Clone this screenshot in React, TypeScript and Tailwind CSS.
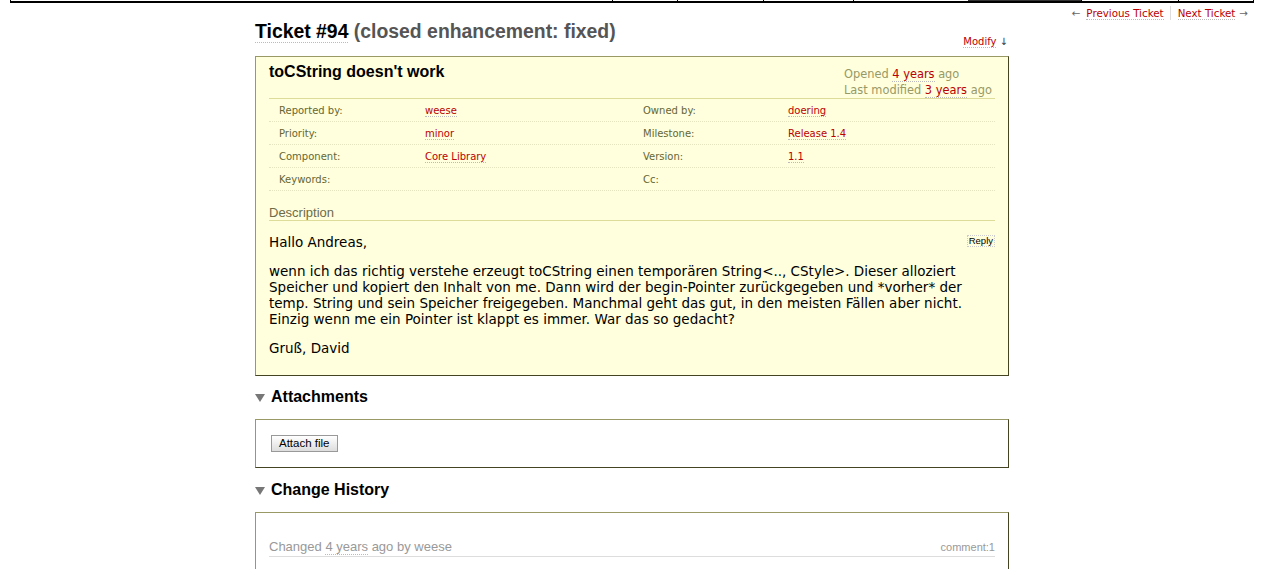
import React from 'react';

const Link: React.FC<{ children: React.ReactNode }> = ({ children }) => (
    <a className="text-[#bb0000] border-b border-dotted border-[#bbbbbb] no-underline">{children}</a>
);

const Tri = () => (
    <svg width="10" height="9" viewBox="0 0 10 9" className="mr-[6px]">
        <path d="M0 1 L10 1 L5 9 Z" fill="#777777" />
    </svg>
);

const props: [string, string, string, string][] = [
    ['Reported by:', 'weese', 'Owned by:', 'doering'],
    ['Priority:', 'minor', 'Milestone:', 'Release 1.4'],
    ['Component:', 'Core Library', 'Version:', '1.1'],
    ['Keywords:', '', 'Cc:', ''],
];

export default function App() {
    return (
        <div className="h-screen overflow-hidden bg-white text-black font-['DejaVu_Sans',Verdana,sans-serif]">
            {/* main nav strip, scrolled off the top */}
            <div className="mx-[10px] flex h-[3px] border-x border-b-2 border-black">
                <div className="w-[602px] border-r border-black" />
                <div className="w-[65px] border-r border-black" />
                <div className="w-[86px] border-r border-black" />
                <div className="w-[90px] border-r border-black" />
                <div className="w-[114px]" />
                <div className="w-[113px] bg-[#333333]" />
                <div className="w-[97px] border-l border-black" />
                <div className="flex-1 border-l border-black" />
            </div>

            {/* context nav */}
            <div className="flex justify-end pr-[16px] pt-[3px] text-[10.3px] leading-[14px]">
                <span className="pr-[6px]">
                    <span className="mr-[6px] text-[#666]">←</span>
                    <Link>Previous Ticket</Link>
                </span>
                <span className="border-l border-[#dddddd] pl-[7px]">
                    <Link>Next Ticket</Link>
                    <span className="ml-[4px] text-[#666]">→</span>
                </span>
            </div>

            <div className="ml-[255px] w-[754px]">
                <div className="flex items-end justify-between">
                    <h1 className="font-['Liberation_Sans',Arial,sans-serif] text-[19.4px] font-bold leading-[22px]">
                        <span className="border-b border-dotted border-[#bbbbbb]">Ticket #94</span>{' '}
                        <span className="text-[#555555]">(closed enhancement: fixed)</span>
                    </h1>
                    <div className="mr-[1px] mb-[-7px] text-[10px]">
                        <Link>Modify</Link> <span className="text-[#333]">↓</span>
                    </div>
                </div>

                {/* ticket box */}
                <div className="mt-[14px] border border-t-[#999966] border-l-[#999966] border-r-[#444422] border-b-[#444422] bg-[#ffffdd] px-[13px] pt-[6px] pb-[19px]">
                    <div className="flex justify-between border-b border-[#dddd99]">
                        <h2 className="mt-[-1px] font-['Liberation_Sans',Arial,sans-serif] text-[16px] font-bold leading-[20px]">
                            toCString doesn't work
                        </h2>
                        <div className="w-[148px] mr-[3px] text-left text-[11.4px] leading-[16px] text-[#999966] whitespace-nowrap">
                            <div className="mt-[3px]">
                                Opened <Link>4 years</Link> ago
                            </div>
                            <div>
                                Last modified <Link>3 years</Link> ago
                            </div>
                        </div>
                    </div>

                    <div className="text-[10px] leading-[13px]">
                        {props.map((r) => (
                            <div key={r[0]} className="grid h-[23px] grid-cols-[146px_218px_145px_1fr] items-center border-b border-dotted border-[#e4e4c0]">
                                <div className="pl-[10px] text-[#666633]">{r[0]}</div>
                                <div className="pl-[10px]">{r[1] && <Link>{r[1]}</Link>}</div>
                                <div className="pl-[10px] text-[#666633]">{r[2]}</div>
                                <div className="pl-[10px]">{r[3] && <Link>{r[3]}</Link>}</div>
                            </div>
                        ))}
                    </div>

                    <h3 className="mt-[15px] border-b border-[#dddd99] font-['Liberation_Sans',Arial,sans-serif] text-[13px] leading-[14px] text-[#6e6b49]">
                        Description
                    </h3>

                    <div className="mt-[13px] text-[13.5px] leading-[16px]">
                        <div className="flex items-center justify-between">
                            <p>Hallo Andreas,</p>
                            <span className="mt-[-3px] border border-dotted border-[#cccccc] px-[1px] font-['Liberation_Sans',Arial,sans-serif] text-[9.5px] leading-[10px]">
                                Reply
                            </span>
                        </div>
                        <p className="mt-[13px]">
                            wenn ich das richtig verstehe erzeugt toCString einen temporären String&lt;.., CStyle&gt;. Dieser alloziert
                            <br />
                            Speicher und kopiert den Inhalt von me. Dann wird der begin-Pointer zurückgegeben und *vorher* der
                            <br />
                            temp. String und sein Speicher freigegeben. Manchmal geht das gut, in den meisten Fällen aber nicht.
                            <br />
                            Einzig wenn me ein Pointer ist klappt es immer. War das so gedacht?
                        </p>
                        <p className="mt-[13px]">Gruß, David</p>
                    </div>
                </div>

                {/* attachments */}
                <h2 className="mt-[12px] flex items-center font-['Liberation_Sans',Arial,sans-serif] text-[16px] font-bold leading-[18px]">
                    <Tri />
                    Attachments
                </h2>
                <div className="mt-[13px] flex h-[49px] items-start border border-t-[#999966] border-l-[#999966] border-r-[#444422] border-b-[#444422] px-[15px] pt-[15px]">
                    <button className="h-[17px] border border-[#999999] bg-gradient-to-b from-white to-[#dddddd] px-[7px] font-['Liberation_Sans',Arial,sans-serif] text-[11.5px] leading-[15px]">
                        Attach file
                    </button>
                </div>

                {/* change history */}
                <h2 className="mt-[13px] flex items-center font-['Liberation_Sans',Arial,sans-serif] text-[16px] font-bold leading-[18px]">
                    <Tri />
                    Change History
                </h2>
                <div className="mt-[13px] border border-t-[#999966] border-l-[#999966] border-r-[#444422] px-[13px] pt-[26px] pb-[40px]">
                    <div className="flex items-end justify-between border-b border-[#dddddd] pb-[1px] font-['Liberation_Sans',Arial,sans-serif] text-[#999999]">
                        <span className="text-[13px] leading-[16px]">
                            Changed <span className="border-b border-dotted border-[#bbbbbb]">4 years</span> ago by weese
                        </span>
                        <span className="text-[11px] leading-[15px]">comment:1</span>
                    </div>
                </div>
            </div>
        </div>
    );
}
